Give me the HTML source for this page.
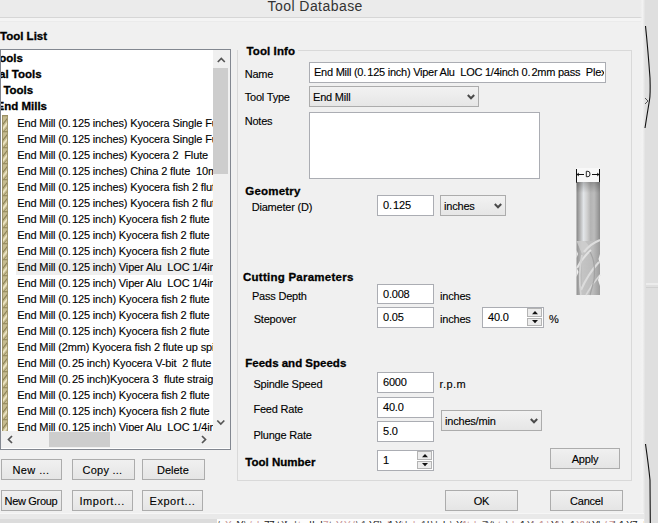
<!DOCTYPE html>
<html><head><meta charset="utf-8"><style>
html,body{margin:0;padding:0;width:658px;height:523px;overflow:hidden;background:#f0f0f0}
body{position:relative;font-family:"Liberation Sans", sans-serif}
.t{position:absolute;white-space:pre;line-height:1;-webkit-text-stroke:0.12px currentColor;font-family:"Liberation Sans", sans-serif}
</style></head><body>
<div style="position:absolute;left:0px;top:0px;width:658px;height:523px;background:#f0f0f0"></div>
<div style="position:absolute;left:0px;top:0px;width:644px;height:17px;background:#ebebeb"></div>
<div style="position:absolute;left:0px;top:17px;width:644px;height:1px;background:#d6d6d6"></div>
<div style="position:absolute;left:0px;top:18px;width:641px;height:3px;background:#f4f4f4"></div>
<div style="position:absolute;left:0px;top:21px;width:641px;height:1px;background:#ebebeb"></div>
<div style="position:absolute;left:644px;top:0px;width:14px;height:523px;background:#dfdfdf"></div>
<div style="position:absolute;left:640px;top:0px;width:5px;height:523px;background:linear-gradient(90deg,rgba(240,240,240,0),#f2f2f2 50%,#e2e2e2)"></div>
<div style="position:absolute;left:646px;top:283px;width:12px;height:2px;background:#ececec"></div>
<div style="position:absolute;left:646px;top:287px;width:12px;height:1px;background:#d0d0d0"></div>
<div class="t" style="left:267.5px;top:-0.75px;font-size:14px;font-weight:normal;letter-spacing:0.45px;color:#333;-webkit-text-stroke:0">Tool Database</div>
<div class="t" style="left:0px;top:30.97px;font-size:11.5px;font-weight:bold;letter-spacing:0px;color:#000;-webkit-text-stroke:0.3px currentColor">Tool List</div>
<div style="position:absolute;left:0px;top:49px;width:231px;height:401px;box-sizing:border-box;border:1px solid #828790;background:#fff"></div>
<div style="position:absolute;left:1px;top:50px;width:212px;height:381px;overflow:hidden"><div class="t" style="left:-8px;top:3.47px;font-size:11.5px;font-weight:bold;letter-spacing:0px;color:#000;-webkit-text-stroke:0.3px currentColor">Tools</div><div class="t" style="left:-2px;top:19.47px;font-size:11.5px;font-weight:bold;letter-spacing:0px;color:#000;-webkit-text-stroke:0.3px currentColor">al Tools</div><div class="t" style="left:-4px;top:35.47px;font-size:11.5px;font-weight:bold;letter-spacing:0px;color:#000;-webkit-text-stroke:0.3px currentColor">l Tools</div><div class="t" style="left:-4.5px;top:51.47px;font-size:11.5px;font-weight:bold;letter-spacing:0px;color:#000;-webkit-text-stroke:0.3px currentColor">End Mills</div><svg style="position:absolute;left:1px;top:65px" width="6" height="16" viewBox="0 0 6 16"><rect x="0" y="0" width="6" height="16" fill="#c6bb8f"/><path d="M-0.5 11 L6.5 2" stroke="#8c8157" stroke-width="1.1"/><path d="M-0.5 15.5 L6.5 6.5" stroke="#ebe3c3" stroke-width="1.8"/><path d="M1.5 16.5 L6.5 11" stroke="#978b60" stroke-width="0.9"/><path d="M0.5 0 V16" stroke="#9c9166" stroke-width="1"/><path d="M5.5 0 V16" stroke="#a39870" stroke-width="1"/><rect x="0" y="0" width="6" height="1.3" fill="#9a8f63"/></svg><div class="t" style="left:16.3px;top:67.89px;font-size:11px;font-weight:normal;letter-spacing:-0.14px;color:#000;">End Mill (0.<span style="margin-left:1.3px"></span>125 inches) Kyocera Single Fute</div><svg style="position:absolute;left:1px;top:81px" width="6" height="16" viewBox="0 0 6 16"><rect x="0" y="0" width="6" height="16" fill="#c6bb8f"/><path d="M-0.5 11 L6.5 2" stroke="#8c8157" stroke-width="1.1"/><path d="M-0.5 15.5 L6.5 6.5" stroke="#ebe3c3" stroke-width="1.8"/><path d="M1.5 16.5 L6.5 11" stroke="#978b60" stroke-width="0.9"/><path d="M0.5 0 V16" stroke="#9c9166" stroke-width="1"/><path d="M5.5 0 V16" stroke="#a39870" stroke-width="1"/><rect x="0" y="0" width="6" height="1.3" fill="#9a8f63"/></svg><div class="t" style="left:16.3px;top:83.89px;font-size:11px;font-weight:normal;letter-spacing:-0.14px;color:#000;">End Mill (0.<span style="margin-left:1.3px"></span>125 inches) Kyocera Single Fute</div><svg style="position:absolute;left:1px;top:97px" width="6" height="16" viewBox="0 0 6 16"><rect x="0" y="0" width="6" height="16" fill="#c6bb8f"/><path d="M-0.5 11 L6.5 2" stroke="#8c8157" stroke-width="1.1"/><path d="M-0.5 15.5 L6.5 6.5" stroke="#ebe3c3" stroke-width="1.8"/><path d="M1.5 16.5 L6.5 11" stroke="#978b60" stroke-width="0.9"/><path d="M0.5 0 V16" stroke="#9c9166" stroke-width="1"/><path d="M5.5 0 V16" stroke="#a39870" stroke-width="1"/><rect x="0" y="0" width="6" height="1.3" fill="#9a8f63"/></svg><div class="t" style="left:16.3px;top:99.89px;font-size:11px;font-weight:normal;letter-spacing:-0.14px;color:#000;">End Mill (0.<span style="margin-left:1.3px"></span>125 inches) Kyocera 2  Flute</div><svg style="position:absolute;left:1px;top:113px" width="6" height="16" viewBox="0 0 6 16"><rect x="0" y="0" width="6" height="16" fill="#c6bb8f"/><path d="M-0.5 11 L6.5 2" stroke="#8c8157" stroke-width="1.1"/><path d="M-0.5 15.5 L6.5 6.5" stroke="#ebe3c3" stroke-width="1.8"/><path d="M1.5 16.5 L6.5 11" stroke="#978b60" stroke-width="0.9"/><path d="M0.5 0 V16" stroke="#9c9166" stroke-width="1"/><path d="M5.5 0 V16" stroke="#a39870" stroke-width="1"/><rect x="0" y="0" width="6" height="1.3" fill="#9a8f63"/></svg><div class="t" style="left:16.3px;top:115.89px;font-size:11px;font-weight:normal;letter-spacing:-0.14px;color:#000;">End Mill (0.<span style="margin-left:1.3px"></span>125 inches) China 2 flute  10mm</div><svg style="position:absolute;left:1px;top:129px" width="6" height="16" viewBox="0 0 6 16"><rect x="0" y="0" width="6" height="16" fill="#c6bb8f"/><path d="M-0.5 11 L6.5 2" stroke="#8c8157" stroke-width="1.1"/><path d="M-0.5 15.5 L6.5 6.5" stroke="#ebe3c3" stroke-width="1.8"/><path d="M1.5 16.5 L6.5 11" stroke="#978b60" stroke-width="0.9"/><path d="M0.5 0 V16" stroke="#9c9166" stroke-width="1"/><path d="M5.5 0 V16" stroke="#a39870" stroke-width="1"/><rect x="0" y="0" width="6" height="1.3" fill="#9a8f63"/></svg><div class="t" style="left:16.3px;top:131.89px;font-size:11px;font-weight:normal;letter-spacing:-0.14px;color:#000;">End Mill (0.<span style="margin-left:1.3px"></span>125 inches) Kyocera fish 2 flute</div><svg style="position:absolute;left:1px;top:145px" width="6" height="16" viewBox="0 0 6 16"><rect x="0" y="0" width="6" height="16" fill="#c6bb8f"/><path d="M-0.5 11 L6.5 2" stroke="#8c8157" stroke-width="1.1"/><path d="M-0.5 15.5 L6.5 6.5" stroke="#ebe3c3" stroke-width="1.8"/><path d="M1.5 16.5 L6.5 11" stroke="#978b60" stroke-width="0.9"/><path d="M0.5 0 V16" stroke="#9c9166" stroke-width="1"/><path d="M5.5 0 V16" stroke="#a39870" stroke-width="1"/><rect x="0" y="0" width="6" height="1.3" fill="#9a8f63"/></svg><div class="t" style="left:16.3px;top:147.89px;font-size:11px;font-weight:normal;letter-spacing:-0.14px;color:#000;">End Mill (0.<span style="margin-left:1.3px"></span>125 inches) Kyocera fish 2 flute</div><svg style="position:absolute;left:1px;top:161px" width="6" height="16" viewBox="0 0 6 16"><rect x="0" y="0" width="6" height="16" fill="#c6bb8f"/><path d="M-0.5 11 L6.5 2" stroke="#8c8157" stroke-width="1.1"/><path d="M-0.5 15.5 L6.5 6.5" stroke="#ebe3c3" stroke-width="1.8"/><path d="M1.5 16.5 L6.5 11" stroke="#978b60" stroke-width="0.9"/><path d="M0.5 0 V16" stroke="#9c9166" stroke-width="1"/><path d="M5.5 0 V16" stroke="#a39870" stroke-width="1"/><rect x="0" y="0" width="6" height="1.3" fill="#9a8f63"/></svg><div class="t" style="left:16.3px;top:163.89px;font-size:11px;font-weight:normal;letter-spacing:-0.14px;color:#000;">End Mill (0.<span style="margin-left:1.3px"></span>125 inch) Kyocera fish 2 flute</div><svg style="position:absolute;left:1px;top:177px" width="6" height="16" viewBox="0 0 6 16"><rect x="0" y="0" width="6" height="16" fill="#c6bb8f"/><path d="M-0.5 11 L6.5 2" stroke="#8c8157" stroke-width="1.1"/><path d="M-0.5 15.5 L6.5 6.5" stroke="#ebe3c3" stroke-width="1.8"/><path d="M1.5 16.5 L6.5 11" stroke="#978b60" stroke-width="0.9"/><path d="M0.5 0 V16" stroke="#9c9166" stroke-width="1"/><path d="M5.5 0 V16" stroke="#a39870" stroke-width="1"/><rect x="0" y="0" width="6" height="1.3" fill="#9a8f63"/></svg><div class="t" style="left:16.3px;top:179.89px;font-size:11px;font-weight:normal;letter-spacing:-0.14px;color:#000;">End Mill (0.<span style="margin-left:1.3px"></span>125 inch) Kyocera fish 2 flute</div><svg style="position:absolute;left:1px;top:193px" width="6" height="16" viewBox="0 0 6 16"><rect x="0" y="0" width="6" height="16" fill="#c6bb8f"/><path d="M-0.5 11 L6.5 2" stroke="#8c8157" stroke-width="1.1"/><path d="M-0.5 15.5 L6.5 6.5" stroke="#ebe3c3" stroke-width="1.8"/><path d="M1.5 16.5 L6.5 11" stroke="#978b60" stroke-width="0.9"/><path d="M0.5 0 V16" stroke="#9c9166" stroke-width="1"/><path d="M5.5 0 V16" stroke="#a39870" stroke-width="1"/><rect x="0" y="0" width="6" height="1.3" fill="#9a8f63"/></svg><div class="t" style="left:16.3px;top:195.89px;font-size:11px;font-weight:normal;letter-spacing:-0.14px;color:#000;">End Mill (0.<span style="margin-left:1.3px"></span>125 inch) Kyocera fish 2 flute</div><div style="position:absolute;left:15px;top:209px;width:200px;height:15.5px;background:#efefef"></div><svg style="position:absolute;left:1px;top:209px" width="6" height="16" viewBox="0 0 6 16"><rect x="0" y="0" width="6" height="16" fill="#c6bb8f"/><path d="M-0.5 11 L6.5 2" stroke="#8c8157" stroke-width="1.1"/><path d="M-0.5 15.5 L6.5 6.5" stroke="#ebe3c3" stroke-width="1.8"/><path d="M1.5 16.5 L6.5 11" stroke="#978b60" stroke-width="0.9"/><path d="M0.5 0 V16" stroke="#9c9166" stroke-width="1"/><path d="M5.5 0 V16" stroke="#a39870" stroke-width="1"/><rect x="0" y="0" width="6" height="1.3" fill="#9a8f63"/></svg><div class="t" style="left:16.3px;top:211.89px;font-size:11px;font-weight:normal;letter-spacing:-0.14px;color:#000;">End Mill (0.<span style="margin-left:1.3px"></span>125 inch) Viper Alu  LOC 1/4inch</div><svg style="position:absolute;left:1px;top:225px" width="6" height="16" viewBox="0 0 6 16"><rect x="0" y="0" width="6" height="16" fill="#c6bb8f"/><path d="M-0.5 11 L6.5 2" stroke="#8c8157" stroke-width="1.1"/><path d="M-0.5 15.5 L6.5 6.5" stroke="#ebe3c3" stroke-width="1.8"/><path d="M1.5 16.5 L6.5 11" stroke="#978b60" stroke-width="0.9"/><path d="M0.5 0 V16" stroke="#9c9166" stroke-width="1"/><path d="M5.5 0 V16" stroke="#a39870" stroke-width="1"/><rect x="0" y="0" width="6" height="1.3" fill="#9a8f63"/></svg><div class="t" style="left:16.3px;top:227.89px;font-size:11px;font-weight:normal;letter-spacing:-0.14px;color:#000;">End Mill (0.<span style="margin-left:1.3px"></span>125 inch) Viper Alu  LOC 1/4inch</div><svg style="position:absolute;left:1px;top:241px" width="6" height="16" viewBox="0 0 6 16"><rect x="0" y="0" width="6" height="16" fill="#c6bb8f"/><path d="M-0.5 11 L6.5 2" stroke="#8c8157" stroke-width="1.1"/><path d="M-0.5 15.5 L6.5 6.5" stroke="#ebe3c3" stroke-width="1.8"/><path d="M1.5 16.5 L6.5 11" stroke="#978b60" stroke-width="0.9"/><path d="M0.5 0 V16" stroke="#9c9166" stroke-width="1"/><path d="M5.5 0 V16" stroke="#a39870" stroke-width="1"/><rect x="0" y="0" width="6" height="1.3" fill="#9a8f63"/></svg><div class="t" style="left:16.3px;top:243.89px;font-size:11px;font-weight:normal;letter-spacing:-0.14px;color:#000;">End Mill (0.<span style="margin-left:1.3px"></span>125 inch) Kyocera fish 2 flute</div><svg style="position:absolute;left:1px;top:257px" width="6" height="16" viewBox="0 0 6 16"><rect x="0" y="0" width="6" height="16" fill="#c6bb8f"/><path d="M-0.5 11 L6.5 2" stroke="#8c8157" stroke-width="1.1"/><path d="M-0.5 15.5 L6.5 6.5" stroke="#ebe3c3" stroke-width="1.8"/><path d="M1.5 16.5 L6.5 11" stroke="#978b60" stroke-width="0.9"/><path d="M0.5 0 V16" stroke="#9c9166" stroke-width="1"/><path d="M5.5 0 V16" stroke="#a39870" stroke-width="1"/><rect x="0" y="0" width="6" height="1.3" fill="#9a8f63"/></svg><div class="t" style="left:16.3px;top:259.89px;font-size:11px;font-weight:normal;letter-spacing:-0.14px;color:#000;">End Mill (0.<span style="margin-left:1.3px"></span>125 inch) Kyocera fish 2 flute</div><svg style="position:absolute;left:1px;top:273px" width="6" height="16" viewBox="0 0 6 16"><rect x="0" y="0" width="6" height="16" fill="#c6bb8f"/><path d="M-0.5 11 L6.5 2" stroke="#8c8157" stroke-width="1.1"/><path d="M-0.5 15.5 L6.5 6.5" stroke="#ebe3c3" stroke-width="1.8"/><path d="M1.5 16.5 L6.5 11" stroke="#978b60" stroke-width="0.9"/><path d="M0.5 0 V16" stroke="#9c9166" stroke-width="1"/><path d="M5.5 0 V16" stroke="#a39870" stroke-width="1"/><rect x="0" y="0" width="6" height="1.3" fill="#9a8f63"/></svg><div class="t" style="left:16.3px;top:275.89px;font-size:11px;font-weight:normal;letter-spacing:-0.14px;color:#000;">End Mill (0.<span style="margin-left:1.3px"></span>125 inch) Kyocera fish 2 flute</div><svg style="position:absolute;left:1px;top:289px" width="6" height="16" viewBox="0 0 6 16"><rect x="0" y="0" width="6" height="16" fill="#c6bb8f"/><path d="M-0.5 11 L6.5 2" stroke="#8c8157" stroke-width="1.1"/><path d="M-0.5 15.5 L6.5 6.5" stroke="#ebe3c3" stroke-width="1.8"/><path d="M1.5 16.5 L6.5 11" stroke="#978b60" stroke-width="0.9"/><path d="M0.5 0 V16" stroke="#9c9166" stroke-width="1"/><path d="M5.5 0 V16" stroke="#a39870" stroke-width="1"/><rect x="0" y="0" width="6" height="1.3" fill="#9a8f63"/></svg><div class="t" style="left:16.3px;top:291.89px;font-size:11px;font-weight:normal;letter-spacing:-0.14px;color:#000;">End Mill (2mm) Kyocera fish 2 flute up spiral</div><svg style="position:absolute;left:1px;top:305px" width="6" height="16" viewBox="0 0 6 16"><rect x="0" y="0" width="6" height="16" fill="#c6bb8f"/><path d="M-0.5 11 L6.5 2" stroke="#8c8157" stroke-width="1.1"/><path d="M-0.5 15.5 L6.5 6.5" stroke="#ebe3c3" stroke-width="1.8"/><path d="M1.5 16.5 L6.5 11" stroke="#978b60" stroke-width="0.9"/><path d="M0.5 0 V16" stroke="#9c9166" stroke-width="1"/><path d="M5.5 0 V16" stroke="#a39870" stroke-width="1"/><rect x="0" y="0" width="6" height="1.3" fill="#9a8f63"/></svg><div class="t" style="left:16.3px;top:307.89px;font-size:11px;font-weight:normal;letter-spacing:-0.14px;color:#000;">End Mill (0.<span style="margin-left:1.3px"></span>25 inch) Kyocera V-bit  2 flute</div><svg style="position:absolute;left:1px;top:321px" width="6" height="16" viewBox="0 0 6 16"><rect x="0" y="0" width="6" height="16" fill="#c6bb8f"/><path d="M-0.5 11 L6.5 2" stroke="#8c8157" stroke-width="1.1"/><path d="M-0.5 15.5 L6.5 6.5" stroke="#ebe3c3" stroke-width="1.8"/><path d="M1.5 16.5 L6.5 11" stroke="#978b60" stroke-width="0.9"/><path d="M0.5 0 V16" stroke="#9c9166" stroke-width="1"/><path d="M5.5 0 V16" stroke="#a39870" stroke-width="1"/><rect x="0" y="0" width="6" height="1.3" fill="#9a8f63"/></svg><div class="t" style="left:16.3px;top:323.89px;font-size:11px;font-weight:normal;letter-spacing:-0.14px;color:#000;">End Mill (0.<span style="margin-left:1.3px"></span>25 inch)Kyocera 3  flute straight</div><svg style="position:absolute;left:1px;top:337px" width="6" height="16" viewBox="0 0 6 16"><rect x="0" y="0" width="6" height="16" fill="#c6bb8f"/><path d="M-0.5 11 L6.5 2" stroke="#8c8157" stroke-width="1.1"/><path d="M-0.5 15.5 L6.5 6.5" stroke="#ebe3c3" stroke-width="1.8"/><path d="M1.5 16.5 L6.5 11" stroke="#978b60" stroke-width="0.9"/><path d="M0.5 0 V16" stroke="#9c9166" stroke-width="1"/><path d="M5.5 0 V16" stroke="#a39870" stroke-width="1"/><rect x="0" y="0" width="6" height="1.3" fill="#9a8f63"/></svg><div class="t" style="left:16.3px;top:339.89px;font-size:11px;font-weight:normal;letter-spacing:-0.14px;color:#000;">End Mill (0.<span style="margin-left:1.3px"></span>125 inch) Kyocera fish 2 flute</div><svg style="position:absolute;left:1px;top:353px" width="6" height="16" viewBox="0 0 6 16"><rect x="0" y="0" width="6" height="16" fill="#c6bb8f"/><path d="M-0.5 11 L6.5 2" stroke="#8c8157" stroke-width="1.1"/><path d="M-0.5 15.5 L6.5 6.5" stroke="#ebe3c3" stroke-width="1.8"/><path d="M1.5 16.5 L6.5 11" stroke="#978b60" stroke-width="0.9"/><path d="M0.5 0 V16" stroke="#9c9166" stroke-width="1"/><path d="M5.5 0 V16" stroke="#a39870" stroke-width="1"/><rect x="0" y="0" width="6" height="1.3" fill="#9a8f63"/></svg><div class="t" style="left:16.3px;top:355.89px;font-size:11px;font-weight:normal;letter-spacing:-0.14px;color:#000;">End Mill (0.<span style="margin-left:1.3px"></span>125 inch) Kyocera fish 2 flute</div><svg style="position:absolute;left:1px;top:369px" width="6" height="16" viewBox="0 0 6 16"><rect x="0" y="0" width="6" height="16" fill="#c6bb8f"/><path d="M-0.5 11 L6.5 2" stroke="#8c8157" stroke-width="1.1"/><path d="M-0.5 15.5 L6.5 6.5" stroke="#ebe3c3" stroke-width="1.8"/><path d="M1.5 16.5 L6.5 11" stroke="#978b60" stroke-width="0.9"/><path d="M0.5 0 V16" stroke="#9c9166" stroke-width="1"/><path d="M5.5 0 V16" stroke="#a39870" stroke-width="1"/><rect x="0" y="0" width="6" height="1.3" fill="#9a8f63"/></svg><div class="t" style="left:16.3px;top:371.89px;font-size:11px;font-weight:normal;letter-spacing:-0.14px;color:#000;">End Mill (0.<span style="margin-left:1.3px"></span>125 inch) Viper Alu  LOC 1/4inch</div></div>
<div style="position:absolute;left:213px;top:50px;width:17px;height:381px;background:#f0f0f0"></div>
<div style="position:absolute;left:213px;top:68px;width:15px;height:106px;background:#cdcdcd"></div>
<svg style="position:absolute;left:213px;top:50px" width="17" height="17"><path d="M4.8 12 L8.3 8.5 L11.8 12" stroke="#555" stroke-width="1.7" fill="none"/></svg>
<svg style="position:absolute;left:213px;top:414px" width="17" height="17"><path d="M4.3 6.5 L7.8 10 L11.3 6.5" stroke="#555" stroke-width="1.7" fill="none"/></svg>
<div style="position:absolute;left:1px;top:431px;width:229px;height:17px;background:#f0f0f0"></div>
<div style="position:absolute;left:49px;top:432px;width:61px;height:15px;background:#cdcdcd"></div>
<svg style="position:absolute;left:1px;top:431px" width="17" height="17"><path d="M11 5 L7.5 8.5 L11 12" stroke="#555" stroke-width="1.7" fill="none"/></svg>
<svg style="position:absolute;left:196px;top:431px" width="17" height="17"><path d="M6 5 L9.5 8.5 L6 12" stroke="#555" stroke-width="1.7" fill="none"/></svg>
<div style="position:absolute;left:1px;top:459px;width:61px;height:21px;box-sizing:border-box;border:1px solid #acacac;background:linear-gradient(#f0f0f0,#e5e5e5);"></div>
<div class="t" style="left:12.5px;top:464.89px;font-size:11px;font-weight:normal;letter-spacing:0.4px;color:#000;">New ...</div>
<div style="position:absolute;left:72px;top:459px;width:63px;height:21px;box-sizing:border-box;border:1px solid #acacac;background:linear-gradient(#f0f0f0,#e5e5e5);"></div>
<div class="t" style="left:82.5px;top:464.89px;font-size:11px;font-weight:normal;letter-spacing:0.25px;color:#000;">Copy ...</div>
<div style="position:absolute;left:142px;top:459px;width:63px;height:21px;box-sizing:border-box;border:1px solid #acacac;background:linear-gradient(#f0f0f0,#e5e5e5);"></div>
<div class="t" style="left:157px;top:464.89px;font-size:11px;font-weight:normal;letter-spacing:0px;color:#000;">Delete</div>
<div style="position:absolute;left:1px;top:490px;width:61px;height:21px;box-sizing:border-box;border:1px solid #acacac;background:linear-gradient(#f0f0f0,#e5e5e5);"></div>
<div class="t" style="left:4.5px;top:495.89px;font-size:11px;font-weight:normal;letter-spacing:-0.3px;color:#000;">New Group</div>
<div style="position:absolute;left:72px;top:490px;width:61px;height:21px;box-sizing:border-box;border:1px solid #acacac;background:linear-gradient(#f0f0f0,#e5e5e5);"></div>
<div class="t" style="left:79.5px;top:495.89px;font-size:11px;font-weight:normal;letter-spacing:0.55px;color:#000;">Import...</div>
<div style="position:absolute;left:142px;top:490px;width:61px;height:21px;box-sizing:border-box;border:1px solid #acacac;background:linear-gradient(#f0f0f0,#e5e5e5);"></div>
<div class="t" style="left:149.5px;top:495.89px;font-size:11px;font-weight:normal;letter-spacing:0.55px;color:#000;">Export...</div>
<div style="position:absolute;left:237px;top:50px;width:395px;height:431px;box-sizing:border-box;border:1px solid #d9d9d9"></div>
<div style="position:absolute;left:238px;top:44px;width:60px;height:12px;background:#f0f0f0"></div>
<div class="t" style="left:246.5px;top:45.97px;font-size:11.5px;font-weight:bold;letter-spacing:0.1px;color:#000;-webkit-text-stroke:0.3px currentColor">Tool Info</div>
<div class="t" style="left:244.7px;top:69.39px;font-size:11px;font-weight:normal;letter-spacing:-0.2px;color:#000;">Name</div>
<div style="position:absolute;left:309px;top:62px;width:297px;height:21px;box-sizing:border-box;border:1px solid #abadb3;background:#fff;"></div>
<div style="position:absolute;left:310px;top:63px;width:294px;height:19px;overflow:hidden"><div class="t" style="left:4px;top:3.99px;font-size:11px;font-weight:normal;letter-spacing:-0.25px;color:#000;">End Mill (0.<span style="margin-left:1.3px"></span>125 inch) Viper Alu  LOC 1/4inch 0.<span style="margin-left:1.3px"></span>2mm pass  Plexi</div></div>
<div class="t" style="left:244.7px;top:92.39px;font-size:11px;font-weight:normal;letter-spacing:-0.2px;color:#000;">Tool Type</div>
<div style="position:absolute;left:309px;top:86px;width:170px;height:21px;box-sizing:border-box;border:1px solid #acacac;background:linear-gradient(#f2f2f2,#e6e6e6);"></div>
<div class="t" style="left:313px;top:91.89px;font-size:11px;font-weight:normal;letter-spacing:-0.2px;color:#000;">End Mill</div>
<svg style="position:absolute;left:465.5px;top:92.8px" width="10" height="8"><path d="M1.8 2 L5 5.3 L8.2 2" stroke="#4a4a4a" stroke-width="2" fill="none"/></svg>
<div class="t" style="left:244.7px;top:116.39px;font-size:11px;font-weight:normal;letter-spacing:-0.2px;color:#000;">Notes</div>
<div style="position:absolute;left:309px;top:112px;width:231px;height:67px;box-sizing:border-box;border:1px solid #abadb3;background:#fff;"></div>
<div class="t" style="left:245.3px;top:185.97px;font-size:11.5px;font-weight:bold;letter-spacing:0.2px;color:#000;-webkit-text-stroke:0.3px currentColor">Geometry</div>
<div class="t" style="left:251.7px;top:202.39px;font-size:11px;font-weight:normal;letter-spacing:-0.2px;color:#000;">Diameter (D)</div>
<div style="position:absolute;left:377px;top:195px;width:57px;height:21px;box-sizing:border-box;border:1px solid #abadb3;background:#fff;"></div>
<div style="position:absolute;left:378px;top:196px;width:54px;height:19px;overflow:hidden"><div class="t" style="left:5px;top:3.99px;font-size:11px;font-weight:normal;letter-spacing:-0.2px;color:#000;">0.<span style="margin-left:1.3px"></span>125</div></div>
<div style="position:absolute;left:440px;top:195px;width:66px;height:21px;box-sizing:border-box;border:1px solid #acacac;background:linear-gradient(#f2f2f2,#e6e6e6);"></div>
<div class="t" style="left:444px;top:200.89px;font-size:11px;font-weight:normal;letter-spacing:-0.2px;color:#000;">inches</div>
<svg style="position:absolute;left:492.5px;top:201.8px" width="10" height="8"><path d="M1.8 2 L5 5.3 L8.2 2" stroke="#4a4a4a" stroke-width="2" fill="none"/></svg>
<div class="t" style="left:243px;top:272.47px;font-size:11.5px;font-weight:bold;letter-spacing:0.25px;color:#000;-webkit-text-stroke:0.3px currentColor">Cutting Parameters</div>
<div class="t" style="left:251.9px;top:290.89px;font-size:11px;font-weight:normal;letter-spacing:-0.2px;color:#000;">Pass Depth</div>
<div style="position:absolute;left:377px;top:284px;width:57px;height:20px;box-sizing:border-box;border:1px solid #abadb3;background:#fff;"></div>
<div style="position:absolute;left:378px;top:285px;width:54px;height:18px;overflow:hidden"><div class="t" style="left:5px;top:3.99px;font-size:11px;font-weight:normal;letter-spacing:-0.2px;color:#000;">0.008</div></div>
<div class="t" style="left:440px;top:290.89px;font-size:11px;font-weight:normal;letter-spacing:-0.2px;color:#000;">inches</div>
<div class="t" style="left:253.7px;top:314.39px;font-size:11px;font-weight:normal;letter-spacing:-0.2px;color:#000;">Stepover</div>
<div style="position:absolute;left:377px;top:307px;width:57px;height:21px;box-sizing:border-box;border:1px solid #abadb3;background:#fff;"></div>
<div style="position:absolute;left:378px;top:308px;width:54px;height:19px;overflow:hidden"><div class="t" style="left:5px;top:3.99px;font-size:11px;font-weight:normal;letter-spacing:-0.2px;color:#000;">0.05</div></div>
<div class="t" style="left:440px;top:313.89px;font-size:11px;font-weight:normal;letter-spacing:-0.2px;color:#000;">inches</div>
<div style="position:absolute;left:482px;top:307px;width:62px;height:21px;box-sizing:border-box;border:1px solid #abadb3;background:#fff;"></div>
<div style="position:absolute;left:483px;top:308px;width:59px;height:19px;overflow:hidden"><div class="t" style="left:5px;top:3.99px;font-size:11px;font-weight:normal;letter-spacing:-0.2px;color:#000;">40.0</div></div>
<div style="position:absolute;left:527px;top:308px;width:15px;height:8.5px;box-sizing:border-box;border:1px solid #b4b4b4;background:#ececec"></div>
<div style="position:absolute;left:527px;top:317.5px;width:15px;height:8px;box-sizing:border-box;border:1px solid #b4b4b4;background:#ececec"></div>
<svg style="position:absolute;left:531.5px;top:310.5px" width="6" height="4"><path d="M0 3.2 L3 0 L6 3.2Z" fill="#111"/></svg>
<svg style="position:absolute;left:531.5px;top:320px" width="6" height="4"><path d="M0 0 L3 3.2 L6 0Z" fill="#111"/></svg>
<div class="t" style="left:549px;top:314.39px;font-size:11px;font-weight:normal;letter-spacing:-0.2px;color:#000;">%</div>
<div class="t" style="left:245.3px;top:357.97px;font-size:11.5px;font-weight:bold;letter-spacing:0px;color:#000;-webkit-text-stroke:0.3px currentColor">Feeds and Speeds</div>
<div class="t" style="left:253.4px;top:379.39px;font-size:11px;font-weight:normal;letter-spacing:-0.2px;color:#000;">Spindle Speed</div>
<div style="position:absolute;left:377px;top:372px;width:57px;height:21px;box-sizing:border-box;border:1px solid #abadb3;background:#fff;"></div>
<div style="position:absolute;left:378px;top:373px;width:54px;height:19px;overflow:hidden"><div class="t" style="left:5px;top:3.99px;font-size:11px;font-weight:normal;letter-spacing:-0.2px;color:#000;">6000</div></div>
<div class="t" style="left:439.5px;top:379.39px;font-size:11px;font-weight:normal;letter-spacing:0.4px;color:#000;">r.p.m</div>
<div class="t" style="left:253.4px;top:404.39px;font-size:11px;font-weight:normal;letter-spacing:-0.2px;color:#000;">Feed Rate</div>
<div style="position:absolute;left:377px;top:397px;width:57px;height:21px;box-sizing:border-box;border:1px solid #abadb3;background:#fff;"></div>
<div style="position:absolute;left:378px;top:398px;width:54px;height:19px;overflow:hidden"><div class="t" style="left:5px;top:3.99px;font-size:11px;font-weight:normal;letter-spacing:-0.2px;color:#000;">40.0</div></div>
<div class="t" style="left:253.4px;top:430.39px;font-size:11px;font-weight:normal;letter-spacing:-0.2px;color:#000;">Plunge Rate</div>
<div style="position:absolute;left:377px;top:421px;width:57px;height:21px;box-sizing:border-box;border:1px solid #abadb3;background:#fff;"></div>
<div style="position:absolute;left:378px;top:422px;width:54px;height:19px;overflow:hidden"><div class="t" style="left:5px;top:3.99px;font-size:11px;font-weight:normal;letter-spacing:-0.2px;color:#000;">5.0</div></div>
<div style="position:absolute;left:441px;top:410px;width:101px;height:21px;box-sizing:border-box;border:1px solid #acacac;background:linear-gradient(#f2f2f2,#e6e6e6);"></div>
<div class="t" style="left:445px;top:415.89px;font-size:11px;font-weight:normal;letter-spacing:-0.2px;color:#000;">inches/min</div>
<svg style="position:absolute;left:528.5px;top:416.8px" width="10" height="8"><path d="M1.8 2 L5 5.3 L8.2 2" stroke="#4a4a4a" stroke-width="2" fill="none"/></svg>
<div class="t" style="left:245.3px;top:456.97px;font-size:11.5px;font-weight:bold;letter-spacing:0px;color:#000;-webkit-text-stroke:0.3px currentColor">Tool Number</div>
<div style="position:absolute;left:377px;top:450px;width:57px;height:21px;box-sizing:border-box;border:1px solid #abadb3;background:#fff;"></div>
<div style="position:absolute;left:378px;top:451px;width:54px;height:19px;overflow:hidden"><div class="t" style="left:5px;top:3.99px;font-size:11px;font-weight:normal;letter-spacing:-0.2px;color:#000;">1</div></div>
<div style="position:absolute;left:417px;top:451px;width:15px;height:8.5px;box-sizing:border-box;border:1px solid #b4b4b4;background:#ececec"></div>
<div style="position:absolute;left:417px;top:460.5px;width:15px;height:8px;box-sizing:border-box;border:1px solid #b4b4b4;background:#ececec"></div>
<svg style="position:absolute;left:421.5px;top:453.5px" width="6" height="4"><path d="M0 3.2 L3 0 L6 3.2Z" fill="#111"/></svg>
<svg style="position:absolute;left:421.5px;top:463px" width="6" height="4"><path d="M0 0 L3 3.2 L6 0Z" fill="#111"/></svg>
<div style="position:absolute;left:550px;top:448px;width:70px;height:21px;box-sizing:border-box;border:1px solid #acacac;background:linear-gradient(#f0f0f0,#e5e5e5);"></div>
<div class="t" style="left:550px;top:453.89px;width:70px;text-align:center;font-size:11px;letter-spacing:-0.2px">Apply</div>
<div style="position:absolute;left:445px;top:490px;width:73px;height:21px;box-sizing:border-box;border:1px solid #acacac;background:linear-gradient(#f0f0f0,#e5e5e5);"></div>
<div class="t" style="left:445px;top:495.89px;width:73px;text-align:center;font-size:11px;letter-spacing:-0.2px">OK</div>
<div style="position:absolute;left:550px;top:490px;width:73px;height:21px;box-sizing:border-box;border:1px solid #acacac;background:linear-gradient(#f0f0f0,#e5e5e5);"></div>
<div class="t" style="left:550px;top:495.89px;width:73px;text-align:center;font-size:11px;letter-spacing:-0.2px">Cancel</div>
<svg style="position:absolute;left:570px;top:162px" width="36" height="138" viewBox="0 0 36 138">
<defs>
<linearGradient id="sh" x1="0" x2="1"><stop offset="0" stop-color="#858585"/><stop offset="0.13" stop-color="#adadad"/><stop offset="0.3" stop-color="#e2e5e8"/><stop offset="0.45" stop-color="#d0d0d0"/><stop offset="0.6" stop-color="#b4b4b4"/><stop offset="0.75" stop-color="#bcbcbc"/><stop offset="0.9" stop-color="#a0a0a0"/><stop offset="1" stop-color="#8a8a8a"/></linearGradient>
<linearGradient id="fl" x1="0" x2="1"><stop offset="0" stop-color="#909090"/><stop offset="0.25" stop-color="#c4c4c4"/><stop offset="0.7" stop-color="#bcbcbc"/><stop offset="1" stop-color="#9c9c9c"/></linearGradient>
<linearGradient id="tb" x1="0" x2="0" y1="0" y2="1"><stop offset="0" stop-color="#000" stop-opacity="0.22"/><stop offset="1" stop-color="#000" stop-opacity="0"/></linearGradient>
</defs>
<rect x="6" y="6" width="24" height="14" fill="#f8f8f8"/>
<path d="M6.5 7 V21 M29.5 7 V21" stroke="#111" stroke-width="1" fill="none"/>
<path d="M7 12.5 H14 M22 12.5 H29" stroke="#111" stroke-width="1" fill="none"/>
<path d="M7 12.5 L9 11 M7 12.5 L9 14 M29 12.5 L27 11 M29 12.5 L27 14" stroke="#111" stroke-width="0.8"/>
<path d="M16.3 9.3 V14.7 H18 Q20 14.7 20 12 Q20 9.3 18 9.3 Z" stroke="#111" stroke-width="0.9" fill="none"/>
<rect x="6.5" y="20" width="23.5" height="59" fill="url(#sh)"/>
<rect x="6.5" y="20" width="23.5" height="11" fill="url(#tb)"/>
<rect x="6.5" y="79" width="23.5" height="54" fill="url(#fl)"/>
<path d="M6.5 79 L15 79 L20 85 L12 92 Z" fill="#cfcfcf" opacity="0.8"/>
<path d="M14 90 Q20 82 30 78" stroke="#dedede" stroke-width="2.2" fill="none"/>
<path d="M7 106 Q12 96 21 88" stroke="#e2e2e2" stroke-width="2" fill="none"/>
<path d="M11 128 Q18 112 29 100" stroke="#dcdcdc" stroke-width="2" fill="none"/>
<path d="M16 133 Q22 122 30 113" stroke="#d8d8d8" stroke-width="1.6" fill="none"/>
<path d="M12 93 Q8 112 11 133" stroke="#d4d4d4" stroke-width="1.8" fill="none"/>
<path d="M20 90 Q26 100 24 118 Q22 126 20 133" stroke="#9c9c9c" stroke-width="1.2" fill="none" opacity="0.8"/>
<path d="M6.5 88 L8 92 L6.5 96 Z M6.5 105 L8.5 110 L6.5 115 Z M30 92 L28.5 97 L30 102 Z M30 112 L28 118 L30 124 Z" fill="#f0f0f0"/>
</svg>
<svg style="position:absolute;left:640px;top:0" width="18" height="523">
<path d="M5.5 26 Q8 50 10 78 Q10.5 95 9.5 100 Q7 115 5 128" stroke="#111" stroke-width="1.1" fill="none"/>
<path d="M5 98 L8 101 L5 104" stroke="#333" stroke-width="0.8" fill="none"/>
<path d="M5.5 444 Q8.5 465 10 480 L10.3 523" stroke="#111" stroke-width="1.1" fill="none"/>
</svg>
<div style="position:absolute;left:0px;top:513px;width:644px;height:1px;background:#f6f6f6"></div>
<div style="position:absolute;left:0px;top:514px;width:644px;height:5px;background:#e9e9e9"></div>
<div style="position:absolute;left:0px;top:519px;width:217px;height:4px;background:#dcdcdc"></div>
<div style="position:absolute;left:217px;top:519px;width:427px;height:4px;background:#fdfdfd"></div>
<div style="position:absolute;left:217px;top:519px;width:427px;height:4px;overflow:hidden;"><div class="t" style="left:0;top:1.5px;font-size:10px;-webkit-text-stroke:0"><span style="position:absolute;left:0px;color:#555">/</span><span style="position:absolute;left:8px;color:#c08a8a">X</span><span style="position:absolute;left:16px;color:#555">d</span><span style="position:absolute;left:20px;color:#222">Y</span><span style="position:absolute;left:27px;color:#555">\</span><span style="position:absolute;left:32px;color:#d09a9a">/</span><span style="position:absolute;left:40px;color:#d09a9a">k</span><span style="position:absolute;left:47px;color:#222">7</span><span style="position:absolute;left:52px;color:#222">7</span><span style="position:absolute;left:60px;color:#222">t</span><span style="position:absolute;left:64px;color:#555">X</span><span style="position:absolute;left:68px;color:#222">\</span><span style="position:absolute;left:74px;color:#555">d</span><span style="position:absolute;left:81px;color:#d09a9a">t</span><span style="position:absolute;left:89px;color:#222">d</span><span style="position:absolute;left:95px;color:#222">I</span><span style="position:absolute;left:100px;color:#222">d</span><span style="position:absolute;left:106px;color:#d09a9a">7</span><span style="position:absolute;left:112px;color:#555">t</span><span style="position:absolute;left:119px;color:#c08a8a">Y</span><span style="position:absolute;left:127px;color:#d09a9a">Y</span><span style="position:absolute;left:135px;color:#c08a8a">/</span><span style="position:absolute;left:139px;color:#555">\</span><span style="position:absolute;left:144px;color:#555">1</span><span style="position:absolute;left:152px;color:#222">Y</span><span style="position:absolute;left:157px;color:#555">7</span><span style="position:absolute;left:163px;color:#222">\</span><span style="position:absolute;left:167px;color:#d09a9a">d</span><span style="position:absolute;left:171px;color:#222">1</span><span style="position:absolute;left:178px;color:#222">X</span><span style="position:absolute;left:184px;color:#d09a9a">t</span><span style="position:absolute;left:188px;color:#555">l</span><span style="position:absolute;left:196px;color:#d09a9a">l</span><span style="position:absolute;left:204px;color:#555">1</span><span style="position:absolute;left:210px;color:#222">k</span><span style="position:absolute;left:214px;color:#222">\</span><span style="position:absolute;left:218px;color:#555">I</span><span style="position:absolute;left:226px;color:#222">l</span><span style="position:absolute;left:233px;color:#555">\</span><span style="position:absolute;left:239px;color:#222">X</span><span style="position:absolute;left:245px;color:#c08a8a">1</span><span style="position:absolute;left:250px;color:#d09a9a">t</span><span style="position:absolute;left:257px;color:#d09a9a">k</span><span style="position:absolute;left:265px;color:#555">7</span><span style="position:absolute;left:269px;color:#555">Y</span><span style="position:absolute;left:275px;color:#222">t</span><span style="position:absolute;left:281px;color:#c08a8a">t</span><span style="position:absolute;left:289px;color:#555">\</span><span style="position:absolute;left:295px;color:#d09a9a">l</span><span style="position:absolute;left:303px;color:#222">1</span><span style="position:absolute;left:310px;color:#555">Y</span><span style="position:absolute;left:315px;color:#c08a8a">l</span><span style="position:absolute;left:322px;color:#c08a8a">1</span><span style="position:absolute;left:330px;color:#d09a9a">\</span><span style="position:absolute;left:334px;color:#222">Y</span><span style="position:absolute;left:338px;color:#c08a8a">1</span><span style="position:absolute;left:345px;color:#555">\</span><span style="position:absolute;left:353px;color:#222">1</span><span style="position:absolute;left:359px;color:#c08a8a">X</span><span style="position:absolute;left:365px;color:#c08a8a">Y</span><span style="position:absolute;left:371px;color:#222">t</span><span style="position:absolute;left:375px;color:#222">Y</span><span style="position:absolute;left:381px;color:#222">k</span><span style="position:absolute;left:387px;color:#c08a8a">/</span><span style="position:absolute;left:392px;color:#d09a9a">7</span><span style="position:absolute;left:396px;color:#555">I</span><span style="position:absolute;left:402px;color:#222">1</span><span style="position:absolute;left:409px;color:#222">X</span><span style="position:absolute;left:415px;color:#222">7</span><span style="position:absolute;left:423px;color:#c08a8a">d</span></div></div>
</body></html>
